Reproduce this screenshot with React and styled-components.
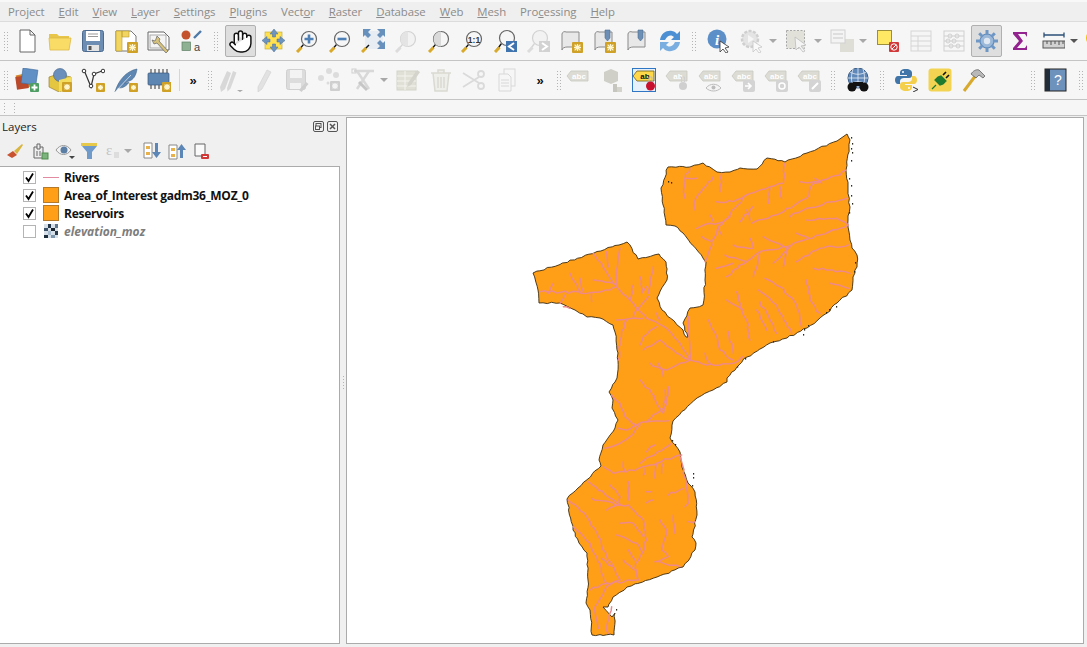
import styled, { createGlobalStyle } from 'styled-components'
import { Hand } from 'lucide-react'

const GlobalStyle = createGlobalStyle`
  html, body {
    margin: 0;
    padding: 0;
    background: #f0f0f0;
    overflow: hidden;
  }
`

const Window = styled.div`
  width: 1087px;
  height: 647px;
  display: flex;
  flex-direction: column;
  font-family: 'Open Sans', 'Liberation Sans', sans-serif;
  overflow: hidden;
  background: #f0f0f0;
`

const MenuBar = styled.div`
  height: 19px;
  border-top: 2px solid #f8f8f8;
  display: flex;
  align-items: center;
  padding-left: 8px;
  gap: 14px;
  background: #efefef;
  border-bottom: 1px solid #dcdcdc;
`

const MenuItem = styled.span`
  font-size: 11.4px;
  letter-spacing: -0.08px;
  color: #8b8b8b;
  white-space: nowrap;
  u {
    text-underline-offset: 1px;
  }
`

const ToolBar = styled.div`
  height: 38px;
  display: flex;
  align-items: center;
  flex-shrink: 0;
  padding-left: 2px;
  background: #f6f6f6;
  border-bottom: 1px solid #c4c4c4;
`

const EmptyBar = styled.div`
  height: 15px;
  flex-shrink: 0;
  background: #f6f6f6;
  border-bottom: 1px solid #c4c4c4;
  display: flex;
  align-items: center;
  padding-left: 2px;
  gap: 5px;
`

const Grip = styled.i`
  display: flex;
  justify-content: center;
  align-items: center;
  flex-shrink: 0;
  width: ${p => p.$w || 14}px;
  height: ${p => p.$h || 20}px;
  &::before {
    content: '';
    display: block;
    flex-shrink: 0;
    width: ${p => p.$cols || 6}px;
    height: 100%;
    background-image: radial-gradient(circle at center, #b4b4b4 0.8px, transparent 1px);
    background-size: 3px 3px;
  }
`

const Spacer = styled.i`
  display: block;
  flex-shrink: 0;
  width: ${p => p.$w}px;
`

const ToolButton = styled.div`
  flex-shrink: 0;
  width: ${p => (p.$active ? 31 : p.$drop ? 45 : 33)}px;
  margin: 0 ${p => (p.$active ? 1 : 0)}px;
  height: 32px;
  box-sizing: border-box;
  display: flex;
  align-items: center;
  justify-content: ${p => (p.$drop ? 'flex-start' : 'center')};
  padding-left: ${p => (p.$drop ? 4 : 0)}px;
  gap: 5px;
  border-radius: 2px;
  border: 1px solid ${p => (p.$active ? '#b0b0b0' : 'transparent')};
  background: ${p => (p.$active ? '#dedede' : 'transparent')};
`

const Glyph = styled.svg`
  width: 24px;
  height: 24px;
  display: block;
  flex-shrink: 0;
`

const DropArrow = styled.i`
  display: block;
  flex-shrink: 0;
  width: 0;
  height: 0;
  border-left: 4px solid transparent;
  border-right: 4px solid transparent;
  border-top: 4px solid ${p => (p.$off ? '#a8a8a8' : '#555')};
`

const Divider = styled.i`
  display: block;
  flex-shrink: 0;
  width: 1px;
  height: 22px;
  background: #d6d6d6;
`

const More = styled.span`
  flex-shrink: 0;
  width: ${p => p.$w}px;
  text-align: center;
  font-size: 13px;
  font-weight: 700;
  color: #111;
  font-family: 'Liberation Sans', sans-serif;
`

const Body = styled.div`
  flex: 1;
  display: flex;
  min-height: 0;
`

const LayersPanel = styled.aside`
  width: 340px;
  flex-shrink: 0;
  display: flex;
  flex-direction: column;
`

const PanelTitle = styled.div`
  height: 20px;
  padding: 0 2px;
  display: flex;
  align-items: center;
  justify-content: space-between;
  font-size: 11.5px;
  color: #222;
`

const TitleButtons = styled.div`
  display: flex;
  gap: 3px;
`

const PanelTools = styled.div`
  height: 30px;
  display: flex;
  align-items: center;
  padding-left: 2px;
`

const PanelTool = styled.div`
  width: ${p => p.$w || 25}px;
  flex-shrink: 0;
  display: flex;
  justify-content: center;
  align-items: center;
`

const Tree = styled.div`
  flex: 1;
  background: #fff;
  border: 1px solid #ababab;
  border-left: none;
  margin-bottom: 3px;
  padding-top: 1px;
`

const Row = styled.div`
  height: 18px;
  display: flex;
  align-items: center;
  padding-left: 23px;
`

const Check = styled.span`
  width: 13px;
  height: 13px;
  box-sizing: border-box;
  border: 1px solid #b4b4b4;
  background: #fff;
  flex-shrink: 0;
  display: flex;
  align-items: center;
  justify-content: center;
`

const SymbolSlot = styled.span`
  width: 17px;
  height: 16px;
  margin: 0 5px 0 6px;
  flex-shrink: 0;
  display: flex;
  align-items: center;
  justify-content: center;
`

const FillSwatch = styled.span`
  display: block;
  width: 16px;
  height: 16px;
  background: #ff9e17;
  border: 1px solid #b47a2a;
  box-sizing: border-box;
`

const LineSwatch = styled.span`
  display: block;
  width: 16px;
  height: 1px;
  background: #e28aa2;
`

const LayerName = styled.span`
  font-size: 12px;
  font-weight: 700;
  font-style: ${p => (p.$off ? 'italic' : 'normal')};
  color: ${p => (p.$off ? '#7d7d7d' : '#111')};
  letter-spacing: ${p => (p.$off ? '0' : '-0.28px')};
  white-space: nowrap;
`

const Splitter = styled.div`
  width: 6px;
  flex-shrink: 0;
  display: flex;
  align-items: center;
  justify-content: center;
`

const Canvas = styled.main`
  flex: 1;
  margin: 1px 3px 3px 0;
  background: #fff;
  border: 1px solid #ababab;
  overflow: hidden;
`

const MapSvg = styled.svg`
  width: 100%;
  height: 100%;
  display: block;
`

/* shared icon bits */
const Star = ({ x = 14, y = 14, s = 10, off }) => (
  <g>
    <rect x={x} y={y} width={s} height={s} rx="1" fill={off ? '#cfcfcf' : '#cfa126'} />
    <g stroke={off ? '#f4f4f4' : '#fff6d0'} strokeWidth="1.3">
      <path d={`M${x + s / 2} ${y + 2}v${s - 4}M${x + 2} ${y + s / 2}h${s - 4}M${x + 2.6} ${y + 2.6}l${s - 5.2} ${s - 5.2}M${x + s - 2.6} ${y + 2.6}l${5.2 - s} ${s - 5.2}`} />
    </g>
  </g>
)

const Mag = ({ off, cx = 14, cy = 10, r = 7.5, children, half }) => (
  <g>
    <path d={`M${cx - r * 0.75} ${cy + r * 0.75}L3 22`} stroke={off ? '#d5d5d5' : '#111'} strokeWidth="1.5" />
    <path d="M2 23l4.5-4.5" stroke={off ? '#dcdcdc' : '#d9a92c'} strokeWidth="3" />
    <circle cx={cx} cy={cy} r={r} fill={off ? '#f2f2f2' : '#f6f6f6'} stroke={off ? '#d2d2d2' : '#666'} strokeWidth="1.2" />
    {half && <path d={`M${cx} ${cy - r}a${r} ${r} 0 0 0 0 ${r * 2}z`} fill={off ? '#e4e4e4' : '#dadada'} />}
    {children}
  </g>
)

const Scroll = () => (
  <path d="M3 5c0-2 3-3 4-2h13v15H8c-2 0-5 1-5 3z" fill="#e8e8e8" stroke="#8a8a8a" strokeWidth="1" />
)

const Pin = () => <path d="M13 1h5v8l-2.5 3-2.5-3z" fill="#6d8fb5" stroke="#4f6f92" strokeWidth=".6" />

const Abc = ({ off = true, label = 'abc' }) => (
  <g>
    <path d="M5 3h17v10H5L1 8z" fill={off ? '#dcdcd4' : '#ffd84a'} stroke={off ? '#c8c8c0' : '#6b5a10'} strokeWidth=".8" />
    <text x="13" y="11" textAnchor="middle" fontSize="8" fontWeight="700" fontFamily="Liberation Sans" fill={off ? '#fff' : '#111'}>{label}</text>
  </g>
)

const icons = {
  newFile: <path d="M5 1h10l5 5v17H5z M15 1v5h5" fill="#fff" stroke="#666" strokeWidth="1" />,
  open: (
    <g>
      <path d="M1 5h8l2 2h10v3H1z" fill="#e8c64a" />
      <path d="M1 9h22l-2 12H2z" fill="#f9dc66" stroke="#dcba46" strokeWidth=".8" />
    </g>
  ),
  save: (
    <g>
      <rect x="1.5" y="1.5" width="21" height="21" rx="2" fill="#6d8db2" stroke="#4c6b8f" />
      <rect x="5" y="2" width="14" height="10" fill="#fff" />
      <path d="M7 5h10M7 7.5h10" stroke="#999" />
      <rect x="6" y="16" width="12" height="6" fill="#e4e4e4" />
      <rect x="7.5" y="17" width="3" height="4" fill="#555" />
    </g>
  ),
  newLayout: (
    <g>
      <path d="M2 2h15l5 5v15H2z" fill="#fff" stroke="#777" />
      <path d="M2 2h6v20H2zM8 2h7v6H8z" fill="#f2d560" stroke="#b99b2c" strokeWidth=".6" />
      <Star x={13} y={13} s={11} />
    </g>
  ),
  layouts: (
    <g>
      <path d="M1 3h16l5 5v13H1z" fill="#fff" stroke="#666" />
      <rect x="3" y="6" width="16" height="13" fill="#f4f4f4" stroke="#aaa" />
      <path d="M10 7l3 3-1 2 9 10-2 2-9-10-3 1-2-4 3 1 1-2z" fill="#d7c27b" stroke="#666" strokeWidth=".7" />
    </g>
  ),
  style: (
    <g>
      <circle cx="6" cy="6" r="4.5" fill="#c4532d" />
      <path d="M14 9l7-7" stroke="#4f7aa8" strokeWidth="2.4" />
      <rect x="2" y="13" width="8.5" height="8.5" fill="#8eb193" stroke="#5f7f63" strokeWidth=".7" />
      <text x="14" y="22" fontSize="11" fontFamily="Liberation Sans" fill="#444">a</text>
    </g>
  ),
  panTo: (
    <g>
      <rect x="3" y="3" width="17" height="17" fill="#ffe04f" stroke="#bda52c" strokeWidth=".6" />
      <g fill="#6d94bf" stroke="#4b6f96" strokeWidth=".5">
        <path d="M12 0l4 5h-2.500v3h-3V5H8z M12 23l4-5h-2.500v-3h-3v3H8z M0 11.500l5-4v2.500h3v3H5v2.500z M23 11.500l-5-4v2.500h-3v3h3v2.500z" />
      </g>
    </g>
  ),
  zoomIn: <Mag><path d="M14 5.500v9M9.500 10h9" stroke="#4e7fb5" strokeWidth="2.600" /></Mag>,
  zoomOut: <Mag><path d="M9.500 10h9" stroke="#4e7fb5" strokeWidth="2.600" /></Mag>,
  zoomFull: (
    <g>
      <rect x="4" y="2" width="18" height="18" fill="#e7edf3" />
      <g fill="#6790bc">
        <path d="M2 0h8l-3 3 3 3-3 3-3-3-2 2zM24 0h-8l3 3-3 3 3 3 3-3 2 2zM24 20h-8l3-3-3-3 3-3 3 3 2-2z" />
      </g>
      <path d="M8 16L2 22" stroke="#111" strokeWidth="1.500" />
      <path d="M1 23l4-4" stroke="#d9a92c" strokeWidth="3" />
    </g>
  ),
  zoomSel: <Mag off half />,
  zoomLayer: <Mag half />,
  zoomNative: (
    <Mag>
      <text x="14" y="13.500" textAnchor="middle" fontSize="8.500" fontWeight="700" fontFamily="Liberation Sans" fill="#333">1:1</text>
    </Mag>
  ),
  zoomLast: (
    <g>
      <Mag cy={9} />
      <rect x="13" y="12" width="11" height="11" fill="#3f74ae" />
      <path d="M21 14l-5 3.500 5 3.500" fill="none" stroke="#fff" strokeWidth="2" />
    </g>
  ),
  zoomNext: (
    <g>
      <Mag off cy={9} />
      <rect x="13" y="12" width="11" height="11" fill="#d2d2d2" />
      <path d="M16 14l5 3.500-5 3.500" fill="none" stroke="#fff" strokeWidth="2" />
    </g>
  ),
  newMap: (
    <g>
      <Scroll />
      <Star x={13} y={13} s={11} />
    </g>
  ),
  new3d: (
    <g>
      <Scroll />
      <Pin />
      <Star x={13} y={13} s={11} />
    </g>
  ),
  bookmarks: (
    <g>
      <Scroll />
      <Pin />
    </g>
  ),
  refresh: (
    <g fill="#4c8fd2">
      <path d="M2 11C3 4 9 1 14 2c3 .500 4 2 5 3l3-3v9h-9l3-3c-2-2-6-3-9 3z" />
      <path d="M22 13c-1 7-7 10-12 9-3-.500-4-2-5-3l-3 3v-9h9l-3 3c2 2 6 3 9-3z" fill="#7aaee0" />
    </g>
  ),
  identify: (
    <g>
      <circle cx="10" cy="10" r="9.500" fill="#5c8fc8" />
      <text x="10" y="16" textAnchor="middle" fontSize="15" fontStyle="italic" fontWeight="700" fontFamily="Liberation Serif" fill="#fff">i</text>
      <path d="M13 12l9 6-4 1 3 4-2 1-3-4-3 3z" fill="#fff" stroke="#333" strokeWidth=".8" />
    </g>
  ),
  run: (
    <g>
      <circle cx="10" cy="10" r="8" fill="#e4e4e4" stroke="#cfcfcf" strokeWidth="2.500" strokeDasharray="3 1.500" />
      <path d="M8 6l6 4-6 4z" fill="#f6f6f6" />
      <path d="M13 12l9 6-4 1 3 4-2 1-3-4-3 3z" fill="#fafafa" stroke="#c6c6c6" strokeWidth=".8" />
    </g>
  ),
  select: (
    <g>
      <rect x="1.500" y="1.500" width="18" height="18" fill="#e1e1d9" stroke="#a8a8a8" strokeDasharray="2 1.500" />
      <path d="M10 8l11 8-5 1 4 5-2 1-4-5-3 3z" fill="#f4f4f4" stroke="#bdbdbd" strokeWidth=".8" />
    </g>
  ),
  attrs: (
    <g>
      <rect x="10" y="10" width="14" height="13" fill="#deded6" />
      <rect x="1" y="1" width="14" height="13" fill="#f4f4f4" stroke="#d0d0d0" />
      <path d="M3 5h10M3 9h10" stroke="#c8c8c8" />
    </g>
  ),
  deselect: (
    <g>
      <rect x="1.500" y="1.500" width="14" height="14" fill="#ffe864" stroke="#9c8f3c" />
      <rect x="13" y="13" width="10" height="10" rx="1" fill="#d23838" />
      <circle cx="18" cy="18" r="3.200" fill="none" stroke="#fff" />
      <path d="M16 20l4-4" stroke="#fff" />
    </g>
  ),
  table: (
    <g fill="none" stroke="#d5d5d5">
      <rect x="2" y="2" width="20" height="20" fill="#f5f5f5" />
      <path d="M2 7h20M2 12h20M2 17h20M9 7v15" />
    </g>
  ),
  abacus: (
    <g fill="none" stroke="#d0d0d0">
      <rect x="2" y="2" width="20" height="20" />
      <path d="M2 7h20M2 12h20M2 17h20" />
      <circle cx="8" cy="7" r="2" />
      <circle cx="15" cy="7" r="2" />
      <circle cx="6" cy="12" r="2" />
      <circle cx="12" cy="12" r="2" />
      <circle cx="9" cy="17" r="2" />
      <circle cx="16" cy="17" r="2" />
    </g>
  ),
  gear: (
    <g>
      <circle cx="12" cy="12" r="7" fill="#9bb8d8" stroke="#5f8bbc" strokeWidth="1.200" />
      <g stroke="#6e97c6" strokeWidth="3">
        <path d="M12 1v5M12 18v5M1 12h5M18 12h5M4.200 4.200l3.500 3.500M16.300 16.300l3.500 3.500M19.800 4.200l-3.500 3.500M7.700 16.300l-3.500 3.500" />
      </g>
      <circle cx="12" cy="12" r="3.200" fill="#dfe8f2" />
    </g>
  ),
  sigma: <path d="M5 3h14v5l-2-3H10l5 7-6 7h8l2-3v5H5v-2l6-7-6-7z" fill="#93248f" />,
  ruler: (
    <g>
      <path d="M3 6h20M3 3.500v5M23 3.500v5" stroke="#2c4f78" strokeWidth="1.300" />
      <rect x="2" y="12" width="22" height="7" fill="#d2d2d2" stroke="#555" />
      <path d="M6 12v3M10 12v4M14 12v3M18 12v4M22 12v3" stroke="#555" />
    </g>
  ),
  tips: <circle cx="8" cy="9" r="8" fill="#f2c100" />,
  addLayer: (
    <g>
      <rect x="2" y="6" width="13" height="14" fill="#d58a2f" transform="rotate(-12 8 13)" />
      <rect x="1" y="8" width="12" height="13" fill="#b9492a" transform="rotate(-8 7 14)" />
      <rect x="7" y="1" width="15" height="15" fill="#5f8fc4" stroke="#3f6a99" strokeWidth=".6" transform="rotate(8 14 8)" />
      <rect x="15" y="15" width="9" height="9" rx="1" fill="#4e9e63" />
      <path d="M19.500 16.500v6M16.500 19.500h6" stroke="#fff" strokeWidth="1.800" />
    </g>
  ),
  geopackage: (
    <g>
      <path d="M1 9l9-3 13 3v10l-12 5-10-5z" fill="#e5c640" stroke="#8b7420" strokeWidth=".6" />
      <circle cx="12" cy="7" r="6.500" fill="#6a8fbc" stroke="#3f5f87" strokeWidth=".6" />
      <path d="M11 12v12l12-5V9z" fill="#f3dc5e" />
      <Star x={14} y={14} s={10} />
    </g>
  ),
  vertex: (
    <g>
      <path d="M3 2l7 17 3-13 8-3" fill="none" stroke="#333" strokeWidth="1.200" />
      <circle cx="3" cy="3" r="1.800" fill="#fff" stroke="#333" />
      <circle cx="10" cy="18" r="1.800" fill="#fff" stroke="#333" />
      <circle cx="13" cy="6" r="1.800" fill="#fff" stroke="#333" />
      <circle cx="22" cy="3" r="1.800" fill="#fff" stroke="#333" />
      <Star x={15} y={15} s={9} />
    </g>
  ),
  feather: (
    <g>
      <path d="M1 24C4 13 12 3 23 1c-1 7-4 11-8 12l-5 2 5-.5c-4 5-8 6-11 5z" fill="#5d86b2" stroke="#3f6489" strokeWidth=".6" />
      <path d="M1 24L17 7" stroke="#dce6f0" strokeWidth=".8" />
      <Star x={15} y={15} s={9} />
    </g>
  ),
  chip: (
    <g>
      <path d="M4 1v20M8 1v20M12 1v20M16 1v20M20 1v20" stroke="#333" />
      <rect x="1" y="5" width="21" height="12" rx="1" fill="#5d86b2" stroke="#39587c" strokeWidth=".7" />
      <Star x={15} y={14} s={10} />
    </g>
  ),
  pencils: (
    <g fill="#d8d8d8">
      <path d="M1 19L8 3l4 2-6 16-4 3zM8 20l6-17 3.500 1.500-6 16-3 3z" />
      <path d="M18 22h6l-3 2z" fill="#a8a8a8" />
    </g>
  ),
  pencil: <path d="M6 19L15 2l4 2-9 17-4 3z" fill="#e2e2e2" stroke="#d0d0d0" strokeWidth=".6" />,
  saveEdits: (
    <g>
      <rect x="1.500" y="1.500" width="19" height="20" rx="2" fill="#dcdcdc" stroke="#d0d0d0" />
      <rect x="5" y="2" width="12" height="8" fill="#f3f3f3" />
      <rect x="5" y="15" width="11" height="6" fill="#f2f2f2" />
      <path d="M14 22l7-8 2.500 2-7 8z" fill="#cfcfcf" />
    </g>
  ),
  digitize: (
    <g fill="#dcdcdc">
      <circle cx="11" cy="3" r="3" />
      <circle cx="3" cy="10" r="3" />
      <circle cx="18" cy="7" r="3" />
      <circle cx="10" cy="15" r="1.500" />
      <Star x={12} y={13} s={10} off />
    </g>
  ),
  vertexTool: (
    <g>
      <path d="M3 3h20M6 3l12 18M18 3L6 21" stroke="#d8d8d8" strokeWidth="2.500" />
      <rect x="1" y="1" width="4" height="4" fill="none" stroke="#d0d0d0" />
      <path d="M8 14l8 8" stroke="#c6c6c6" strokeWidth="3" />
    </g>
  ),
  modify: (
    <g>
      <rect x="1" y="3" width="19" height="19" fill="#e0e0d6" stroke="#d4d4ca" />
      <path d="M1 8h19M1 13h19M1 18h19M9 3v19" stroke="#f4f4f0" />
      <path d="M12 15l9-13 3 2-9 13-4 2z" fill="#d4d4cc" />
    </g>
  ),
  trash: (
    <g fill="none" stroke="#dadad2" strokeWidth="1.500">
      <path d="M2 5h20M9 5V2h6v3M4 5l2 18h12l2-18z" fill="#eeeeea" />
      <path d="M9 9v11M12 9v11M15 9v11" />
    </g>
  ),
  cut: (
    <g fill="none" stroke="#dadada" strokeWidth="1.800">
      <circle cx="19" cy="6" r="3" />
      <circle cx="19" cy="18" r="3" />
      <path d="M1 5l16 10M1 19l16-10" />
    </g>
  ),
  paste: (
    <g fill="#f6f6f6" stroke="#d8d8d8">
      <rect x="9" y="1" width="11" height="17" />
      <path d="M4 6h9l3 3v14H4z" />
      <path d="M6 12h8M6 15h8M6 18h8" />
    </g>
  ),
  abc: <Abc />,
  diagram: (
    <g>
      <path d="M12 1l7 3v9l-7 3-7-3V4z" fill="#cfcfc8" />
      <rect x="14" y="16" width="4" height="8" fill="#c6c6be" />
      <rect x="18" y="19" width="5" height="5" fill="#d4d4cc" />
    </g>
  ),
  labelOn: (
    <g>
      <rect x="0.500" y="0.500" width="23" height="23" fill="#e5f0fa" stroke="#2f76c4" />
      <Abc off={false} label="ab" />
      <circle cx="18.500" cy="18" r="4.500" fill="#c8102e" />
      <path d="M17 13V9h3v4" fill="none" stroke="#bbb" />
    </g>
  ),
  labelPin: (
    <g>
      <Abc label="ab" />
      <circle cx="18" cy="18" r="4" fill="#cfcfcf" />
      <path d="M16.500 14V9h3v5" fill="none" stroke="#d0d0d0" />
    </g>
  ),
  labelEye: (
    <g>
      <Abc />
      <path d="M8 20c4-5 11-5 15 0-4 4-11 4-15 0z" fill="#f4f4f4" stroke="#bcbcbc" />
      <circle cx="15.500" cy="19.500" r="2" fill="#bcbcbc" />
    </g>
  ),
  labelMove: (
    <g>
      <Abc />
      <rect x="12" y="12" width="12" height="12" rx="2" fill="#d4d4d4" />
      <path d="M14 18h5M17 15l3 3-3 3" stroke="#fff" strokeWidth="1.600" fill="none" />
    </g>
  ),
  labelRot: (
    <g>
      <Abc />
      <rect x="12" y="12" width="12" height="12" rx="2" fill="#d4d4d4" />
      <circle cx="18" cy="18" r="3" fill="none" stroke="#fff" strokeWidth="1.500" />
    </g>
  ),
  labelEdit: (
    <g>
      <Abc />
      <rect x="12" y="12" width="12" height="12" rx="2" fill="#d4d4d4" />
      <path d="M15 21l6-6" stroke="#fff" strokeWidth="2" />
    </g>
  ),
  globe: (
    <g>
      <circle cx="12" cy="10" r="10" fill="#5f88b8" stroke="#3b5d85" />
      <path d="M2 10h20M12 0v20M4 4c5 3 11 3 16 0M4 16c5-3 11-3 16 0M7 1c-2 6-2 12 0 18M17 1c2 6 2 12 0 18" stroke="#e6eef6" strokeWidth=".8" fill="none" />
      <circle cx="6" cy="19" r="4.500" fill="#111" />
      <circle cx="18" cy="19" r="4.500" fill="#111" />
      <rect x="7" y="14" width="10" height="4" fill="#111" />
    </g>
  ),
  python: (
    <g>
      <path d="M11 1c-5 0-6 2-6 4v2h7v1H3c-2 0-3 2-3 4s1 4 3 4h2v-3c0-2 2-3 4-3h5c2 0 3-1 3-3V5c0-2-2-4-6-4z" fill="#3f75a8" />
      <path d="M11 23c5 0 6-2 6-4v-2h-7v-1h9c2 0 3-2 3-4s-1-4-3-4h-2v3c0 2-2 3-4 3H8c-2 0-3 1-3 3v2c0 2 2 4 6 4z" fill="#f4cf4c" />
      <circle cx="8" cy="4" r="1" fill="#fff" />
      <circle cx="14" cy="20" r="1" fill="#fff" />
      <path d="M18 19l5 2.500-5 2.500" fill="none" stroke="#333" />
    </g>
  ),
  plugin: (
    <g>
      <rect x="0.500" y="0.500" width="23" height="23" rx="3" fill="#f2d352" />
      <path d="M4 21l4-4M7 12l5 5 3-1 3-3-4-4-1-1-3 1z" fill="#1e7a2f" stroke="#1e7a2f" strokeWidth="1.200" />
      <path d="M15 7l3-3M18 10l3-3" stroke="#111" strokeWidth="1.600" />
    </g>
  ),
  hammer: (
    <g>
      <path d="M3 23L15 7" stroke="#d7a92c" strokeWidth="3" />
      <path d="M10 6c2-3 5-5 8-4l6 6-2 2-4-3-3 3z" fill="#b8b8b8" stroke="#555" strokeWidth=".7" />
    </g>
  ),
  help: (
    <g>
      <rect x="1" y="1" width="21" height="22" fill="#6d92bc" stroke="#222" />
      <rect x="1" y="1" width="5" height="22" fill="#222b38" />
      <text x="14" y="17" textAnchor="middle" fontSize="14" fontFamily="Liberation Sans" fill="#fff">?</text>
    </g>
  ),
}

const ToolIcon = ({ name }) => (
  <Glyph viewBox="0 0 24 24" aria-hidden="true">{icons[name]}</Glyph>
)

const HandIcon = styled(Hand)`
  fill: #fff;
  color: #111;
`

const topItems = [
  ['grip', 8], 'newFile', 'open', 'save', 'newLayout', 'layouts', 'style', ['grip', 16], 'hand', 'panTo', 'zoomIn', 'zoomOut',
  'zoomFull', 'zoomSel', 'zoomLayer', 'zoomNative', 'zoomLast', 'zoomNext', 'newMap', 'new3d', 'bookmarks', 'refresh',
  ['grip', 16], 'identify', 'run:a', 'select:a', 'attrs:a', ['space', 1], 'deselect', 'table', 'abacus', 'gear', 'sigma', 'ruler:b', 'tips',
]

const secondItems = [
  ['grip', 8], 'addLayer', 'geopackage', 'vertex', 'feather', 'chip', ['space', 4], ['div', 0], ['more', 26], ['grip', 8], 'pencils',
  'pencil', 'saveEdits', 'digitize', 'vertexTool:a', 'modify', 'trash', 'cut', 'paste', ['more', 34], ['grip', 4],
  'abc', 'diagram', 'labelOn', 'labelPin', 'labelEye', 'labelMove', 'labelRot', 'labelEdit', ['grip', 16], 'globe',
  ['grip', 16], 'python', 'plugin', 'hammer', ['space', 38], ['grip', 12], 'help', ['grip', 18],
]

function ToolRow({ items }) {
  return (
    <ToolBar>
      {items.map((item, i) => {
        if (Array.isArray(item)) {
          const [kind, w] = item
          if (kind === 'grip') return <Grip key={i} $w={w} />
          if (kind === 'div') return <Divider key={i} />
          if (kind === 'more') return <More key={i} $w={w}>»</More>
          return <Spacer key={i} $w={w} />
        }
        const [name, drop] = item.split(':')
        if (name === 'hand') {
          return (
            <ToolButton key={i} $active>
              <HandIcon size={25} strokeWidth={1.4} />
            </ToolButton>
          )
        }
        return (
          <ToolButton key={i} $active={name === 'gear'} $drop={!!drop}>
            <ToolIcon name={name} />
            {drop && <DropArrow $off={drop === 'a'} />}
          </ToolButton>
        )
      })}
    </ToolBar>
  )
}

const menus = [
  ['Pro', 'j', 'ect'], ['', 'E', 'dit'], ['', 'V', 'iew'], ['', 'L', 'ayer'], ['', 'S', 'ettings'],
  ['', 'P', 'lugins'], ['Vect', 'o', 'r'], ['', 'R', 'aster'], ['', 'D', 'atabase'], ['', 'W', 'eb'],
  ['', 'M', 'esh'], ['Pro', 'c', 'essing'], ['', 'H', 'elp'],
]

const layers = [
  { name: 'Rivers', on: true, kind: 'line' },
  { name: 'Area_of_Interest gadm36_MOZ_0', on: true, kind: 'fill' },
  { name: 'Reservoirs', on: true, kind: 'fill' },
  { name: 'elevation_moz', on: false, kind: 'raster' },
]

const CheckMark = () => (
  <svg width="11" height="11" viewBox="0 0 11 11"><path d="M2 5.500l2.500 3.500L9 1.500" fill="none" stroke="#000" strokeWidth="1.800" /></svg>
)

const RasterIcon = () => (
  <svg width="14" height="14" viewBox="0 0 4 4" shapeRendering="crispEdges">
    <rect width="4" height="4" fill="#d7dfe8" />
    <rect x="1" y="0" width="1" height="1" fill="#24364a" />
    <rect x="3" y="0" width="1" height="1" fill="#5d7690" />
    <rect x="0" y="1" width="1" height="1" fill="#3c5269" />
    <rect x="2" y="1" width="1" height="1" fill="#16222e" />
    <rect x="1" y="2" width="1" height="1" fill="#a8bccf" />
    <rect x="3" y="2" width="1" height="1" fill="#2a3c4e" />
    <rect x="0" y="3" width="1" height="1" fill="#1d2c3a" />
    <rect x="2" y="3" width="1" height="1" fill="#7f97ad" />
  </svg>
)

const panelTools = [
  <svg key="a" width="18" height="18" viewBox="0 0 18 18"><path d="M1 13l6-4 4 4-5 3z" fill="#c9522f" /><path d="M8 9l8-7 1 1-6 9z" fill="#d8b640" /></svg>,
  <svg key="b" width="18" height="18" viewBox="0 0 18 18" fill="#eee" stroke="#666"><path d="M3 5h9v11H3z" /><path d="M6 2h3v5H6z" /><path d="M6 9v5M9 9v5" /><rect x="11" y="11" width="6" height="6" fill="#7db37d" stroke="#4e8e4e" /></svg>,
  <svg key="c" width="20" height="18" viewBox="0 0 20 18"><path d="M1 8c4-6 11-6 15 0-4 6-11 6-15 0z" fill="#f2f2f2" stroke="#999" /><circle cx="9" cy="8" r="3.500" fill="#5b7ea5" /><path d="M14 14h6l-3 3z" fill="#444" /></svg>,
  <svg key="d" width="18" height="18" viewBox="0 0 18 18"><path d="M1 1h16v3l-5 6v7H7v-7L2 4z" fill="#6f9ac9" /><path d="M1 1h16v3H1z" fill="#e6c84a" /></svg>,
  <svg key="e" width="28" height="18" viewBox="0 0 28 18"><text x="0" y="13" fontSize="15" fontFamily="Liberation Serif" fill="#c4c4c4">ε</text><path d="M8 10h5v6H8z" fill="#ddd" /><path d="M18 7h8l-4 4z" fill="#a8a8a8" /></svg>,
  <svg key="f" width="18" height="18" viewBox="0 0 18 18"><path d="M1 1h8v15H1z" fill="#fff" stroke="#888" /><rect x="3" y="4" width="4" height="3" fill="#e8b14a" /><rect x="3" y="10" width="4" height="3" fill="#e8b14a" /><path d="M12 1h3v9h3l-4.500 6L9 10h3z" fill="#5b86b5" /></svg>,
  <svg key="g" width="18" height="18" viewBox="0 0 18 18"><path d="M1 3h8v14H1z" fill="#fff" stroke="#888" /><rect x="3" y="6" width="4" height="3" fill="#e8b14a" /><rect x="3" y="12" width="4" height="3" fill="#e8b14a" /><path d="M12 16h3V8h3l-4.500-6L9 8h3z" fill="#5b86b5" /></svg>,
  <svg key="h" width="18" height="18" viewBox="0 0 18 18"><path d="M2 2h10v12H2z" fill="#fafafa" stroke="#666" /><rect x="8" y="12" width="8" height="5" rx="1" fill="#d23838" /><path d="M10 14.500h4" stroke="#fff" /></svg>,
]

const outline =
  'M847 134L850 140L846 170L848 190L850 207L848 220L850 240L852 248L857 255L857 267L853 277L852 290L837 303L827 313L807 328L787 338L770 343L747 357L737 367L727 378L727 382L713 390L697 398L673 421L670 438L680 452L682 467L688 483L695 492L697 515L692 537L696 543L695 550L683 567L657 577L627 587L613 597L608 607L603 607L612 617L615 613L614 635L592 635L590 610L586 603L588 580L587 553L579 543L573 530L567 499L601 466L599 460L603 445L615 428L618 420L612 408L613 400L609 392L615 382L617 378L618 353L615 332L613 325L600 318L587 317L575 310L560 303L539 303L538 290L533 273L627 242L638 259L659 254L666 262L667 280L657 298L662 310L683 330L686 337L688 337L683 323L690 308L703 305L705 280L706 262L683 233L675 226L666 225L661 188L668 167L690 167L703 163L717 172L730 172L740 168L757 169L767 158L785 162L807 153L837 141Z'

// traced at 3x, kept in those coordinates
const riversNorth = [
  'M510 145L495 175L490 215L495 235', 'M495 175L530 175', 'M605 160L600 215', 'M580 170L550 205L525 240L525 270',
  'M590 245L640 245L680 225L750 200L790 190L795 130', 'M780 200L785 235', 'M750 205L745 250', 'M680 225L630 285L595 320L565 400L555 425',
  'M530 325L570 310L595 310L630 290', 'M570 285L580 305', 'M595 320L605 345', 'M545 350L575 365', 'M700 260L660 305', 'M680 270L690 300',
  'M695 310L780 280L860 235L880 190L960 165L978 150', 'M840 185L900 185', 'M885 175L905 190', 'M810 290L860 265L980 235',
  'M860 300L950 295L985 315L900 345L800 380L720 395L680 425L640 450L620 470', 'M730 350L790 378', 'M640 375L700 385L690 355', 'M615 405L680 425',
  'M720 395L700 470', 'M590 445L640 430', 'M830 425L900 385L985 375', 'M800 380L790 440', 'M810 380L760 430', 'M830 340L870 355',
  'M880 445L920 450L990 460', 'M930 490L985 505', 'M735 475L790 505L830 555L845 620', 'M715 510L770 555L800 610L815 640', 'M860 480L870 540L900 580',
  'M650 515L660 560L680 600L690 660', 'M620 540L670 570', 'M720 545L750 600L770 640', 'M710 570L740 630', 'M565 600L590 650L600 690L640 720',
  'M625 635L640 700', 'M505 590L510 720L560 735L640 730L670 710', 'M555 700L575 735', 'M150 460L180 515', 'M180 475L190 515',
  'M60 515L210 518L270 510L290 500L330 540L380 595L440 625L480 670L510 720', 'M220 400L290 500', 'M300 385L290 450L290 500', 'M260 395L265 440',
  'M220 480L280 490', 'M120 550L135 525', 'M100 490L85 520', 'M215 520L215 545', 'M150 565L130 560', 'M330 540L340 495', 'M385 530L360 560L340 590',
  'M380 500L365 520L360 470', 'M400 440L385 520', 'M290 600L370 595', 'M320 600L300 660L295 720', 'M410 620L370 650L360 675',
  'M370 690L420 660L470 700L510 720', 'M420 600L410 580', 'M390 730L440 750L480 730L510 720', 'M415 730L430 770',
]

const riversSouth = [
  'M385 122L320 125L290 135L255 110L240 70L215 45', 'M320 125L375 80L385 20', 'M340 50L370 100L375 30', 'M300 0L345 50', 'M290 135L260 150L235 145',
  'M300 135L270 170L240 190L195 205', 'M425 225L330 255L260 275L220 280L190 260', 'M395 190L330 230L300 250', 'M345 195L320 215', 'M255 275L250 245',
  'M315 265L310 285', 'M350 250L345 295', 'M370 250L365 280', 'M420 230L440 320L445 370L435 380', 'M145 305L240 375L200 390',
  'M155 355L240 375L265 375L310 420L320 480L300 530L285 560L295 600', 'M210 315L240 350L240 375', 'M265 305L265 360', 'M240 430L280 430L310 470',
  'M230 465L290 490L310 520', 'M265 510L285 540', 'M250 540L285 570', 'M85 360L140 410L175 470L200 530L225 570L240 600L200 620L165 680L175 745',
  'M100 440L150 490L170 530L190 590L200 610', 'M150 630L200 610L290 600', 'M215 680L200 740L205 760', 'M360 420L380 450L365 510L385 530L345 545L420 560',
  'M400 405L405 460', 'M320 335L335 335', 'M320 368L340 360', 'M385 345L430 325', 'M445 425L465 425', 'M185 535L220 560',
]

const specks = [
  [851, 137], [852, 143], [851, 148], [852, 152], [851, 160], [849, 178], [851, 185], [851, 195], [852, 203], [849, 212], [855, 262], [854, 271],
  [836, 306], [826, 312], [829, 309], [808, 325], [804, 329], [773, 341], [745, 358], [737, 366], [672, 440], [675, 444], [693, 473], [693, 477],
  [692, 485], [616, 609], [668, 181], [671, 182], [803, 334],
]

// rivers and coast are traced as straight runs, this roughens them the way real data looks
function roughen(d, amp, step) {
  const nums = d.match(/-?[\d.]+/g).map(Number)
  let out = `M${nums[0]} ${nums[1]}`
  let seed = nums[0] * 7 + nums[1] * 13
  for (let i = 2; i < nums.length; i += 2) {
    const [x0, y0, x1, y1] = [nums[i - 2], nums[i - 1], nums[i], nums[i + 1]]
    const n = Math.max(1, Math.round(Math.hypot(x1 - x0, y1 - y0) / step))
    for (let k = 1; k < n; k++) {
      seed += 1
      const a = Math.sin(seed * 12.9898) * 43758.5453
      const b = Math.sin(seed * 78.233) * 12543.123
      const dx = (a - Math.floor(a) - 0.5) * 2 * amp
      const dy = (b - Math.floor(b) - 0.5) * 2 * amp
      out += `L${(x0 + ((x1 - x0) * k) / n + dx).toFixed(1)} ${(y0 + ((y1 - y0) * k) / n + dy).toFixed(1)}`
    }
    out += `L${x1} ${y1}`
  }
  return out
}

const roughOutline = roughen(outline.replace('Z', ''), 0.8, 4) + 'Z'

function MozambiqueMap() {
  return (
    <MapSvg viewBox="347 118 736 525" preserveAspectRatio="none" aria-label="Map of Mozambique with rivers">
      <path d={roughOutline} fill="#ff9e17" stroke="#3a2a10" strokeWidth="0.9" strokeLinejoin="round" />
      <g fill="none" stroke="#ee8a8c" strokeLinejoin="round" strokeLinecap="round">
        <g transform="translate(520 120) scale(.3333)" strokeWidth="4.400">
          {riversNorth.map(d => <path key={d} d={roughen(d, 3.5, 13)} />)}
        </g>
        <g transform="translate(540 380) scale(.3333)" strokeWidth="4.400">
          {riversSouth.map(d => <path key={d} d={roughen(d, 3.5, 13)} />)}
        </g>
      </g>
      {specks.map(([x, y]) => <rect key={`${x}-${y}`} x={x} y={y} width="1.200" height="1.600" fill="#2b2b20" />)}
    </MapSvg>
  )
}

export default function App() {
  return (
    <Window>
      <GlobalStyle />
      <MenuBar>
        {menus.map(([before, key, after]) => (
          <MenuItem key={before + key + after}>
            {before}<u>{key}</u>{after}
          </MenuItem>
        ))}
      </MenuBar>
      <ToolRow items={topItems} />
      <ToolRow items={secondItems} />
      <EmptyBar>
        <Grip $w={5} $h={12} $cols={3} />
        <Grip $w={5} $h={12} $cols={3} />
      </EmptyBar>
      <Body>
        <LayersPanel>
          <PanelTitle>
            Layers
            <TitleButtons>
              <svg width="11" height="11" viewBox="0 0 11 11" fill="none" stroke="#555"><rect x=".5" y=".5" width="10" height="10" rx="1.500" /><rect x="3" y="2.500" width="5" height="4" /><rect x="2.500" y="5" width="4" height="3.500" fill="#f0f0f0" /></svg>
              <svg width="11" height="11" viewBox="0 0 11 11" fill="none" stroke="#555"><rect x=".5" y=".5" width="10" height="10" rx="1.500" /><path d="M3 3l5 5M8 3l-5 5" strokeWidth="1.500" /></svg>
            </TitleButtons>
          </PanelTitle>
          <PanelTools>
            {panelTools.map((tool, i) => (
              <PanelTool key={i} $w={i === 4 ? 38 : i === 3 ? 24 : 25}>{tool}</PanelTool>
            ))}
          </PanelTools>
          <Tree>
            {layers.map(layer => (
              <Row key={layer.name}>
                <Check>{layer.on && <CheckMark />}</Check>
                <SymbolSlot>
                  {layer.kind === 'line' && <LineSwatch />}
                  {layer.kind === 'fill' && <FillSwatch />}
                  {layer.kind === 'raster' && <RasterIcon />}
                </SymbolSlot>
                <LayerName $off={!layer.on}>{layer.name}</LayerName>
              </Row>
            ))}
          </Tree>
        </LayersPanel>
        <Splitter><Grip $w={3} $h={14} $cols={3} /></Splitter>
        <Canvas>
          <MozambiqueMap />
        </Canvas>
      </Body>
    </Window>
  )
}
